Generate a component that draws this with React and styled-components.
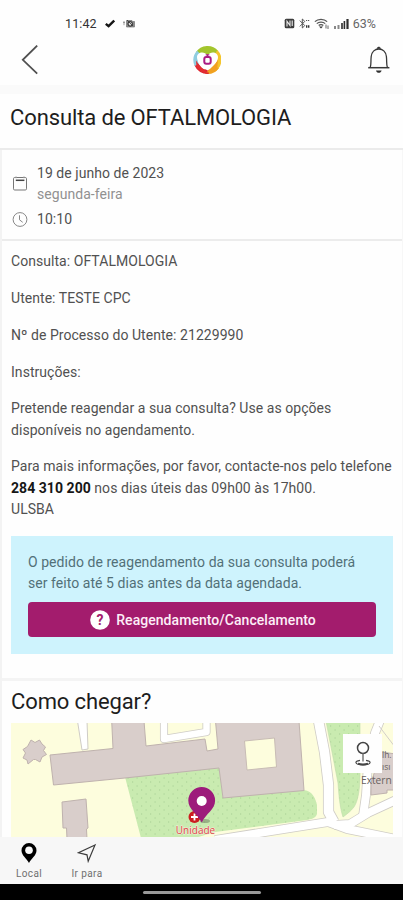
import styled, { createGlobalStyle } from 'styled-components'

const GlobalStyle = createGlobalStyle`
  * { box-sizing: border-box; }

  body {
    margin: 0;
    background: #fefefe;
    font-family: Roboto, 'Liberation Sans', sans-serif;
    color: #515151;
  }
`

const Screen = styled.div`
  display: flex;
  flex-direction: column;
  width: 403px;
  height: 900px;
  overflow: hidden;
`

/* ── Status bar ── */
const StatusBar = styled.div`
  display: flex;
  align-items: center;
  justify-content: space-between;
  height: 34px;
  padding: 13px 27px 0 65px;
`

const StatusGroup = styled.div`
  display: flex;
  align-items: center;
  gap: ${({ $gap }) => $gap}px;
`

const StatusText = styled.span`
  font-size: ${({ $size }) => $size}px;
  letter-spacing: ${({ $spacing = 0 }) => $spacing}px;
  color: ${({ $color }) => $color};
`

/* ── App header ── */
const Header = styled.header`
  display: grid;
  grid-template-columns: 1fr 30px 1fr;
  align-items: center;
  height: 51px;
  padding: 0 12px 0 21px;
`

const IconButton = styled.button`
  display: flex;
  justify-self: ${({ $side }) => $side};
  padding: 0;
  border: none;
  background: transparent;
`

const Divider = styled.div`
  flex: none;
  height: 9px;
  background: #fafafa;
`

const TitleBar = styled.div`
  display: flex;
  align-items: center;
  flex: none;
  height: 56px;
  padding: 0 10px 7px;
  border-bottom: 2px solid #ebebeb;
`

const Title = styled.h1`
  margin: 0;
  font-size: 22px;
  font-weight: 400;
  line-height: 26px;
  letter-spacing: ${({ $spacing }) => $spacing}px;
  color: #1d1d1d;
`

/* ── Content ── */
const Content = styled.main`
  flex: 1;
  min-height: 0;
  overflow: hidden;
  border-left: 2px solid #f3f3f3;
  border-right: 1px solid #f7f7f7;
`

const Schedule = styled.section`
  height: 91px;
  padding: 13px 10px 0;
  border-bottom: 2px solid #ececec;
`

const ScheduleRow = styled.div`
  display: grid;
  grid-template-columns: 16px 1fr;
  column-gap: 9px;
  align-items: center;
  margin-bottom: 4px;
  font-size: 14px;
  line-height: 21px;
`

const Line = styled.span`
  display: block;
  letter-spacing: 0.05px;
  color: ${({ $muted }) => ($muted ? '#919191' : 'inherit')};
`

const Details = styled.section`
  height: 440px;
  padding: 10px 9px 0;
  border-bottom: 3px solid #f4f4f4;
`

const Paragraph = styled.p`
  margin: 0 0 15.65px;
  font-size: 14px;
  line-height: 21.2px;
  white-space: nowrap;

  strong { font-weight: 700; color: #161616; }
`

const Notice = styled.div`
  height: 118px;
  padding: 16px 17px;
  background: #cef3fd;
  font-size: 14px;
  line-height: 21.3px;
  white-space: nowrap;
  color: #527078;
`

const ActionButton = styled.button`
  display: flex;
  align-items: center;
  justify-content: center;
  gap: 6px;
  width: 100%;
  height: 35px;
  margin-top: 8px;
  padding: 0 0 0 2px;
  border: none;
  border-radius: 4px;
  background: #a31c6d;
  font-family: inherit;
  font-size: 14px;
  letter-spacing: 0.05px;
  font-weight: 500;
  color: #fdeef7;
`

const Directions = styled.section`
  padding: 8px 8px 0 9px;
`

const MapFrame = styled.div`
  position: relative;
  height: 114px;
  margin-top: 8px;

  > svg { display: block; }
`

const LocateButton = styled.button`
  position: absolute;
  top: 11px;
  left: 332px;
  display: flex;
  align-items: center;
  justify-content: center;
  width: 39px;
  height: 39px;
  padding: 0;
  border: none;
  background: #fefefe;
`

/* ── Bottom navigation ── */
const BottomNav = styled.nav`
  display: flex;
  flex: none;
  height: 47px;
  padding-left: 9px;
  background: #f7f7f7;
`

const NavItem = styled.div`
  display: flex;
  flex-direction: column;
  align-items: center;
  width: ${({ $width }) => $width}px;
  padding-top: 6px;
  font-size: 10px;
  line-height: 12px;
  letter-spacing: 0.4px;
  color: #707070;

  svg { margin-bottom: 5px; }
`

const GestureBar = styled.div`
  display: flex;
  align-items: center;
  justify-content: center;
  flex: none;
  height: 16px;
  background: #000;
`

const GesturePill = styled.div`
  width: 118px;
  height: 3px;
  border-radius: 2px;
  background: #999;
`

function CheckIcon() {
  return (
    <svg width="10" height="9" viewBox="0 0 10 9" fill="none" stroke="#161616" strokeWidth="2.4">
      <path d="M.8 4.8 3.6 7.2 9.2 1.5" />
    </svg>
  )
}

function CameraIcon() {
  return (
    <svg width="12" height="9" viewBox="0 0 12 9" fill="none">
      <path d="M1 2.2v4M0 3.4h2M3.5 1.5H9v1h2.5V8h-8z" fill="#888" stroke="#777" strokeWidth=".7" />
      <circle cx="7.2" cy="4.9" r="2.2" fill="#ddd" stroke="#222" />
      <path d="m4 1 6 6" stroke="#333" strokeWidth=".8" />
    </svg>
  )
}

function NfcIcon() {
  return (
    <svg width="11" height="11" viewBox="0 0 11 11" fill="none">
      <rect x=".7" y=".7" width="9.6" height="9.6" rx="1.5" fill="#3c3c3c" />
      <path d="M3 8.5V3.2l3 4.3V2.5M8.2 2.5V8" stroke="#eee" strokeWidth="1.1" />
    </svg>
  )
}

function BluetoothIcon() {
  return (
    <svg width="11" height="11" viewBox="0 0 11 11" fill="none" stroke="#555">
      <path d="m.8 2.6 5 5L3.3 10V1l2.5 2.4-5 5" />
      <path d="M7 2.5h3.5" strokeDasharray="1.2 .8" />
      <path d="M7 8.5h3.5" stroke="#333" strokeWidth="2.4" strokeDasharray="1.4 .6" />
    </svg>
  )
}

function WifiIcon() {
  return (
    <svg width="16" height="12" viewBox="0 0 16 12" fill="none" stroke="#555">
      <path d="M.9 3.6C4 .5 10 .5 13.1 3.6M2.8 5.6c2.1-2 6.3-2 8.4 0M4.7 7.5c1.2-1.1 3.4-1.1 4.6 0" strokeWidth="1.3" />
      <path d="m7 10.6-2-2.2h4z" fill="#333" stroke="none" />
      <path d="M12 6.5v4M14 7.5v3.5" strokeWidth=".9" />
    </svg>
  )
}

function SignalIcon() {
  return (
    <svg width="15" height="11" viewBox="0 0 15 11">
      <path d="M0 8h2v3H0zM3.5 7h2v4h-2z" fill="#888" />
      <path d="M7 5h2v6H7z" fill="#555" />
      <path d="M9.6 3h1.6v8H9.6zM12.4 1h2.2v10h-2.2z" fill="#2d2d2d" />
    </svg>
  )
}

function BackIcon() {
  return (
    <svg width="18" height="30" viewBox="0 0 18 30" fill="none" stroke="#505050" strokeWidth="1.8">
      <path d="M16.2.6 1.8 14.8l14.4 13.8" />
    </svg>
  )
}

// Heart cut out of a five-colour ring, drawn 1.5px right of the grid centre
function LogoIcon() {
  return (
    <svg width="30" height="30" viewBox="-1.5 0 30 30" fill="none">
      <g strokeWidth="4.5">
        <path d="M5.2 8.5A11.8 11.8 0 0 1 24 7.4" stroke="#a3c52d" />
        <path d="M23.5 6.8a11.8 11.8 0 0 1-3 18.5" stroke="#f4c52c" />
        <path d="M24.5 22A11.8 11.8 0 0 1 13 26.600" stroke="#f1a321" />
        <path d="M16 26.8A11.8 11.8 0 0 1 4 19.5" stroke="#de2630" />
        <path d="M4.2 20a11.8 11.8 0 0 1 2-12.7" stroke="#8fcde0" />
      </g>
      <path d="M3.500 15.500C6 20 11 24.500 16 28.500L9 27 4 22z" fill="#e22d32" />
      <path d="M25.500 14C23.500 19 18 23 14 27.500l7-1 4-5z" fill="#f2a020" />
      <path d="M6 7c4.500-5.500 14-5.500 18 0l-9 6z" fill="#a3c52d" />
      <path d="M15 25.500C9 20.500 4.500 16.800 4.500 12.300 4.500 6.800 12 5.500 15 10.500c3-5 10.500-3.700 10.500 1.800 0 4.500-4.500 8.200-10.500 13.200z" fill="#fff" />
      <rect x="11.800" y="12" width="6.400" height="6.800" rx="2" stroke="#ab1c84" strokeWidth="2" />
      <path d="M15 9.500v2M13.200 9.800h3.600" stroke="#ab1c84" strokeWidth="1.200" />
    </svg>
  )
}

function BellIcon() {
  return (
    <svg width="24" height="28" viewBox="0 0 24 28" fill="none" stroke="#383838" strokeWidth="1.3">
      <path d="M1.2 21.7h21.2" strokeWidth="1.5" />
      <path d="M3.2 21.5C4.3 19 3.7 15 4.2 10.5 4.7 5.8 8 3 11.8 3s7.1 2.8 7.6 7.5c.5 4.5-.1 8.5 1 11" />
      <path d="M10 2.6c.3-2 3.3-2 3.6 0z" fill="#303030" strokeWidth=".6" />
      <path d="M9 24.4c.6 3.2 5 3.2 5.6 0z" fill="#303030" stroke="none" />
    </svg>
  )
}

function CalendarIcon() {
  return (
    <svg width="16" height="16" viewBox="0 0 16 16" fill="none" stroke="#777">
      <rect x="1.5" y="1.5" width="13" height="12.5" rx="1.2" />
      <path d="M4 .3v2M12 .3v2" stroke="#aaa" />
      <path d="M3.8 4.3h8.6" stroke="#444" strokeWidth="1.5" />
    </svg>
  )
}

function ClockIcon() {
  return (
    <svg width="16" height="16" viewBox="0 0 16 16" fill="none" stroke="#888">
      <circle cx="8" cy="7.5" r="6.9" />
      <path d="M7.5 3.3v4.5l3.2 2.5" />
    </svg>
  )
}

// Question mark is a text node so it follows the page font
function HelpIcon() {
  return (
    <svg width="20" height="20" viewBox="0 0 20 20">
      <circle cx="10" cy="10" r="9.8" fill="#fff" />
      <text x="10" y="15" textAnchor="middle" fontSize="14" fontWeight="700" fill="#a31c6d">?</text>
    </svg>
  )
}

function LocateIcon() {
  return (
    <svg width="18" height="26" viewBox="0 0 18 26" fill="none" stroke="#444" strokeWidth="1.5">
      <circle cx="9" cy="7" r="5.5" />
      <path d="M9 12.5v8" stroke="#777" />
      <path d="M6 19.3c-5.8.9-5.8 4.4 3 4.600 8.800-.2 8.800-3.700 3-4.600" strokeWidth="1.2" />
      <path d="M4 22.600c3 1 7 1 10 0" strokeWidth="2" />
    </svg>
  )
}

function PlaceIcon() {
  return (
    <svg width="16" height="20" viewBox="0 0 16 20" fill="#000">
      <path d="M8 0A7.500 7.500 0 0 0 .5 7.500C.5 12.300 5.500 15.500 8 20c2.500-4.500 7.500-7.700 7.500-12.500A7.500 7.500 0 0 0 8 0z" />
      <circle cx="8" cy="7.300" r="3.800" fill="#fafafa" />
    </svg>
  )
}

function SendIcon() {
  return (
    <svg width="20" height="20" viewBox="0 0 20 20" fill="none" stroke="#3c3c3c" strokeWidth="1.2">
      <path d="M18 2 1.500 9.800l8.500 2 1.200 6.400z" />
    </svg>
  )
}

const ROADS = [
  { d: 'M318 718 324.5 752 328.5 785V812L334 822', width: 9.5 },
  { d: 'M215 840 328 822 347 829 396 839', width: 8 },
  { d: 'M334 825 350 824 368 813 398 799', width: 8 },
  { d: 'M363 816 366 795 367.5 772 375 733 381 718', width: 8 },
  { d: 'M164 718V739L206.5 732V718', width: 6.5 },
]

function AreaMap() {
  return (
    <svg width="382" height="114" viewBox="11 723 382 114">
      <defs>
        <pattern id="grass" width="9" height="8" patternUnits="userSpaceOnUse">
          <rect width="9" height="8" fill="#c9ebb0" />
          <path d="M1.5 2h1.200M6 6h1.200" stroke="#a8cf95" strokeWidth="1" />
        </pattern>
      </defs>
      <rect x="11" y="723" width="382" height="114" fill="#fdfddd" />

      {/* lawns */}
      <path d="M125 777 219 767l4 30 81-7c9 1 12 10 13 15v9c-2 5-6 5-10 6L215 832l-20 6h-54z" fill="url(#grass)" />
      <path d="M326 721h34v54c0 14-2 26-6 32-3 4-7 7-11 10-3-9-4-20-5-34z" fill="url(#grass)" stroke="#bfdcab" strokeWidth=".6" />

      {/* roads: grey casing first, white surface over it */}
      <g fill="none" stroke="#cfccc6" strokeLinejoin="round">
        {ROADS.map(road => <path key={road.d} d={road.d} strokeWidth={road.width + 1.6} />)}
      </g>
      <g fill="none" stroke="#fff" strokeLinejoin="round">
        {ROADS.map(road => <path key={road.d} d={road.d} strokeWidth={road.width} />)}
      </g>
      <path d="M77.5 721H87l1 28-6 1z" fill="#fff" stroke="#cfccc6" />
      <path d="M379 726 395 747" stroke="#d2cec9" fill="none" />

      {/* buildings */}
      <g fill="#d9cecb" stroke="#bfb2ae" strokeWidth="1">
        <path d="m31 740 4 2.500 4.500-2.500 2.500 4 3.500 3-2 3.500 3 4-4.500 2.500-2 5-4.500-2.500h-2L28 764l-1-4-4-2 2.500-5-2.500-3.500 4.500-3z" />
        <path d="M111.700 721H144l2 25 59-7 2 12 11-2-2.500-28H299l5 69.500-81 7.500-4-30-94 10-71.500 7L50 755l63-6.500z" />
        <path d="m62 802 24-3 2 29-1.500 1 .5 10H67l-.5-11H63z" />
        <path d="m371 783 10-31 15 2v36h-9v3l-16 2z" />
      </g>
      <path d="m244.500 741 30-3 2 29-29.500 3z" fill="#fdfddd" stroke="#c8bcb5" />

      <g fontFamily="'Open Sans', sans-serif" fill="#69625f">
        <text x="382" y="758" fontSize="8.500">lh.</text>
        <text x="382" y="770" fontSize="8.500">ısı</text>
        <text x="361" y="783.500" fontSize="10.200">Extern</text>
      </g>

      {/* place marker */}
      <circle cx="194.500" cy="817" r="6" fill="#cc1d20" />
      <path d="M194.500 813.500v7M191 817h7" stroke="#fff" strokeWidth="1.800" />
      <ellipse cx="205" cy="821" rx="5" ry="2" fill="#67785a" opacity=".5" />
      <path d="M201.700 787a13.400 13.400 0 0 0-13.400 13.400c0 9.100 8.900 12.600 13.400 22 4.500-9.400 13.400-12.900 13.400-22A13.400 13.400 0 0 0 201.700 787z" fill="#9d1b7b" />
      <circle cx="201.700" cy="801" r="5" fill="#fff" />
      <text x="195.500" y="834" textAnchor="middle" fontFamily="'Open Sans', sans-serif" fontSize="10" fill="#da4444" stroke="#faf0e0" strokeWidth="1" paintOrder="stroke">Unidade</text>
    </svg>
  )
}

export default function App() {
  return (
    <Screen>
      <GlobalStyle />
      <StatusBar>
        <StatusGroup $gap={8}>
          <StatusText $size={12.5} $spacing={0.1} $color="#333">11:42</StatusText>
          <CheckIcon />
          <CameraIcon />
        </StatusGroup>
        <StatusGroup $gap={4}>
          <NfcIcon />
          <BluetoothIcon />
          <WifiIcon />
          <SignalIcon />
          <StatusText $size={12.5} $color="#666">63%</StatusText>
        </StatusGroup>
      </StatusBar>

      <Header>
        <IconButton type="button" $side="start" aria-label="Voltar"><BackIcon /></IconButton>
        <LogoIcon />
        <IconButton type="button" $side="end" aria-label="Notificações"><BellIcon /></IconButton>
      </Header>
      <Divider />

      <TitleBar>
        <Title $spacing={-0.12}>Consulta de OFTALMOLOGIA</Title>
      </TitleBar>

      <Content>
        <Schedule>
          <ScheduleRow>
            <CalendarIcon />
            <div>
              <Line>19 de junho de 2023</Line>
              <Line $muted>segunda-feira</Line>
            </div>
          </ScheduleRow>
          <ScheduleRow>
            <ClockIcon />
            <Line>10:10</Line>
          </ScheduleRow>
        </Schedule>

        <Details>
          <Paragraph><Line>Consulta: OFTALMOLOGIA</Line></Paragraph>
          <Paragraph><Line>Utente: TESTE CPC</Line></Paragraph>
          <Paragraph><Line>Nº de Processo do Utente: 21229990</Line></Paragraph>
          <Paragraph><Line>Instruções:</Line></Paragraph>
          <Paragraph>
            <Line>Pretende reagendar a sua consulta? Use as opções</Line>
            <Line>disponíveis no agendamento.</Line>
          </Paragraph>
          <Paragraph>
            <Line>Para mais informações, por favor, contacte-nos pelo telefone</Line>
            <Line><strong>284 310 200</strong> nos dias úteis das 09h00 às 17h00.</Line>
            <Line>ULSBA</Line>
          </Paragraph>
          <Notice>
            <Line>O pedido de reagendamento da sua consulta poderá</Line>
            <Line>ser feito até 5 dias antes da data agendada.</Line>
            <ActionButton type="button">
              <HelpIcon />
              Reagendamento/Cancelamento
            </ActionButton>
          </Notice>
        </Details>

        <Directions>
          <Title as="h2" $spacing={-0.12}>Como chegar?</Title>
          <MapFrame>
            <AreaMap />
            <LocateButton type="button" aria-label="Localizar"><LocateIcon /></LocateButton>
          </MapFrame>
        </Directions>
      </Content>

      <BottomNav>
        <NavItem $width={40}>
          <PlaceIcon />
          Local
        </NavItem>
        <NavItem $width={76}>
          <SendIcon />
          Ir para
        </NavItem>
      </BottomNav>
      <GestureBar><GesturePill /></GestureBar>
    </Screen>
  )
}
